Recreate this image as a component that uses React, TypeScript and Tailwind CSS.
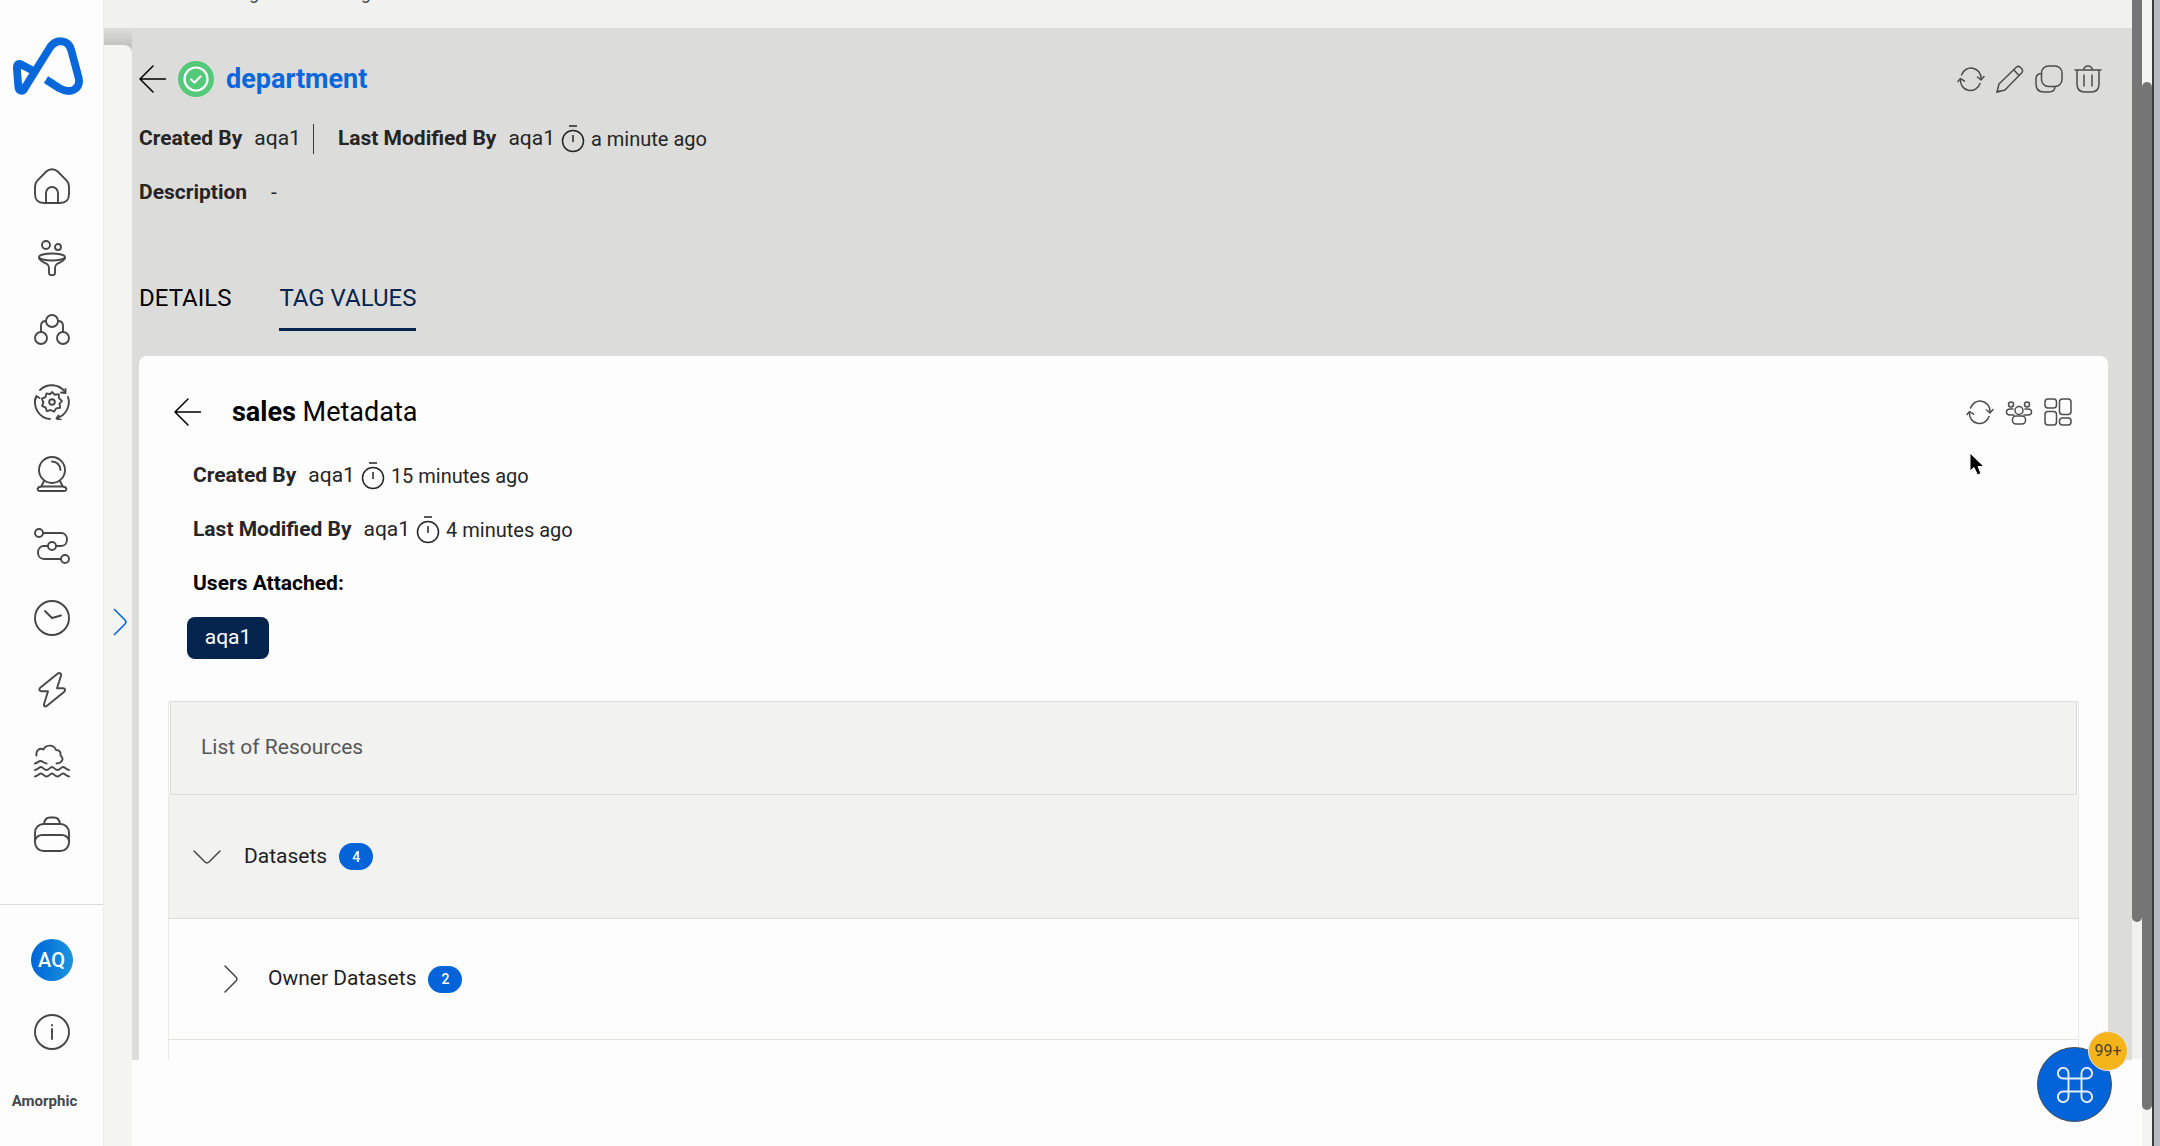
import type { ReactNode } from 'react';

type IconProps = {
  children: ReactNode;
  className?: string;
};

// 36px line icons used in the side navigation
function NavIcon({ children }: { children: ReactNode }) {
  return (
    <svg viewBox="0 0 36 36" className="size-9" fill="none" stroke="currentColor" strokeWidth="1.9" strokeLinecap="round" strokeLinejoin="round">
      {children}
    </svg>
  );
}

// 28px line icons used in toolbars
function ToolIcon({ children, className = '' }: IconProps) {
  return (
    <svg viewBox="0 0 28 28" className={`size-7 ${className}`} fill="none" stroke="currentColor" strokeWidth="1.5" strokeLinecap="round" strokeLinejoin="round">
      {children}
    </svg>
  );
}

const navItems = [
  {
    label: 'Home',
    icon: (
      <>
        <path d="M1 18.5c0-2.5.8-4.5 2.5-6.2l8.800-8.800c3-3 8.400-3 11.400 0l8.800 8.800c1.700 1.700 2.500 3.700 2.500 6.200V26c0 6-3 9-9 9h-16c-6 0-9-3-9-9z" />
        <path d="M12 35V25a6 6 0 0 1 12 0V35" />
      </>
    ),
  },
  {
    label: 'Ingestion',
    icon: (
      <>
        <circle cx="12" cy="5" r="4" />
        <circle cx="24" cy="7" r="3" />
        <ellipse cx="18" cy="17" rx="13" ry="3.5" />
        <path d="M5 18c1 3 5 4.500 8 6 1.500 1 2 2.300 2 4V33c0 3 6 3 6 0v-5c0-1.700.5-3 2-4 3-1.500 7-3 8-6" />
      </>
    ),
  },
  {
    label: 'Catalog',
    icon: (
      <>
        <circle cx="18" cy="9" r="6" />
        <circle cx="7" cy="26" r="6" />
        <circle cx="29" cy="26" r="6" />
        <path d="M7 19.500V14q0-5 5-5M29 19.500V14q0-5-5-5" />
      </>
    ),
  },
  {
    label: 'Transformation',
    icon: (
      <>
        <path d="M6 6A16.500 16.500 0 0 1 31 8M34 13A16.500 16.500 0 0 1 23 34M16 35A16.500 16.500 0 0 1 2 13" />
        <path d="M27 8.500l4.500.5v-4M27 36l-4.500-1.500 2-3M1 16l1.500-4 3 2" />
        <path d="M18 8l2.800 2.700 3.900-.6.200 4 3 2.900-2.400 2.900.6 3.800-4 .7-2.100 3.300-3.400-1.700-3.700 1.200-1.300-3.600-3.500-1.700 1.300-3.500-1.500-3.700 3.500-1.500 1.100-3.800 3.700.8z" />
        <circle cx="18" cy="18" r="2.800" />
      </>
    ),
  },
  {
    label: 'Intelligence',
    icon: (
      <>
        <circle cx="18" cy="14" r="13" />
        <path d="M18 5.500a8.500 8.500 0 0 1 8.500 8.500M10 25l-2.500 5M26 25l2.500 5" />
        <path d="M8 30.500h20c5.500 0 5.500 4.500 2 4.500H6c-3.500 0-3.500-4.500 2-4.500z" />
      </>
    ),
  },
  {
    label: 'Workflows',
    icon: (
      <>
        <circle cx="5" cy="5" r="4" />
        <circle cx="18" cy="18" r="4" />
        <circle cx="31" cy="31" r="4" />
        <path d="M9 5H27c8 0 8 13 0 13h-5M14 18H10c-8 0-8 13 0 13h17" />
      </>
    ),
  },
  {
    label: 'Schedules',
    icon: (
      <>
        <circle cx="18" cy="18" r="17" />
        <path d="M11 11l7 7 9-2.500" />
      </>
    ),
  },
  {
    label: 'Events',
    icon: (
      <path d="M23.500 1.800L6.500 15.500c-2 2-1.500 3.700 1 3.700h6.500l-4 13c-.4 2.300 1.500 2.800 3 1.600L30 20c2-1.800 1.200-3.700-1-3.700h-6l4-12.500c.7-2.200-1.500-3.700-3.500-2z" />
    ),
  },
  {
    label: 'Data lake',
    icon: (
      <>
        <path d="M2.500 11.500C1.500 6 6 3.500 9.500 5.500 11 1 19.500-.5 22 6c3.500 0 5 2 4.500 5.500 4 3 1.500 8-4 8" />
        <path d="M1 19.500c2.500-.5 3.500-2.500 5.500-2.500s3 2 6 2.500M1 26c3-.5 4-3 6-3s3 3 5.500 3 3.500-3 5.500-3 3 3 5.500 3 3.500-3 5.500-3 3 2.500 6 3M1 32.500c3-.5 4-3 6-3s3 3 5.500 3 3.500-3 5.500-3 3 3 5.500 3 3.500-3 5.500-3 3 2.500 6 3" />
      </>
    ),
  },
  {
    label: 'Business',
    icon: (
      <>
        <rect x="1" y="8" width="34" height="27" rx="8.500" />
        <path d="M10 8c.5-4.500 2.500-6.500 6-6.500h4c3.500 0 5.500 2 6 6.500M1 24.500c1-3.500 3.500-5.500 7.500-5.500h19c4 0 6.500 2 7.500 5.500" />
      </>
    ),
  },
];

function RefreshIcon() {
  return (
    <ToolIcon>
      <path d="M4.500 10a10 10 0 0 1 19.500 3.500M23 18.500a10 10 0 0 1-19.500-4" />
      <path d="M20.500 12l3.500 3 3-3.500M1 16.500l2.500-3 4 2.700" />
    </ToolIcon>
  );
}

function ArrowLeft() {
  return (
    <ToolIcon className="text-black">
      <path d="M26.500 14H1M14 1L1 14l13 13" />
    </ToolIcon>
  );
}

function Timer() {
  return (
    <svg viewBox="0 0 24 30" className="mx-1.5 h-[30px] w-6" fill="none" stroke="currentColor" strokeWidth="1.5">
      <circle cx="12" cy="17" r="10.500" />
      <path d="M8 2h8M12 11v7" />
    </svg>
  );
}

function CountBadge({ children }: { children: ReactNode }) {
  return (
    <span className="ml-3 flex h-[27px] w-[34px] items-center justify-center rounded-full bg-[#0264d8] text-sm font-medium text-white">
      {children}
    </span>
  );
}

function MetaRow({ label, user, time }: { label: string; user: string; time: string }) {
  return (
    <div className="flex h-[54px] items-center text-[21px] text-[#252525]">
      <span className="mr-3 font-bold">{label}</span>
      {user}
      <Timer />
      <span className="text-[20px]">{time}</span>
    </div>
  );
}

function Sidebar() {
  return (
    <aside className="flex w-[104px] shrink-0 flex-col items-center border-r border-[#efefef] bg-[#fdfdfd] pt-9 text-[#474747]">
      <a href="#" aria-label="Amorphic home" className="mr-2.5">
        <svg viewBox="0 0 74 60" className="h-[60px] w-[72px]" fill="none" stroke="#0768dc" strokeWidth="8" strokeLinejoin="round">
          <path d="M36 44L50 53C61 59 72 54 69.500 42L62 14C59 2 46 2 40 11L14.500 52C12 57 8 56.500 7.500 51L6 32C6 28 8 27 10.500 28.500L24 35.500" />
        </svg>
      </a>
      <nav className="mt-[72px] flex flex-col gap-9">
        {navItems.map((item) => (
          <button key={item.label} aria-label={item.label} className="block">
            <NavIcon>{item.icon}</NavIcon>
          </button>
        ))}
      </nav>
      <hr className="mt-[52px] w-full border-[#d8d8df]" />
      <button className="mt-[34px] flex size-[42px] items-center justify-center rounded-full bg-gradient-to-r from-[#0264d8] to-[#1d93dc] text-[20px] font-medium text-white">
        AQ
      </button>
      <button aria-label="Information" className="mt-[33px]">
        <NavIcon>
          <circle cx="18" cy="18" r="17" />
          <path d="M18 15v10M18 11v.5" />
        </NavIcon>
      </button>
      <p className="mt-10 mr-3.5 text-[15px] font-bold">Amorphic</p>
    </aside>
  );
}

function ResourceList() {
  return (
    <section className="mx-[29px] mt-[42px] border-x border-[#e8e8e8]">
      <h3 className="mx-px flex h-[94px] items-center border border-[#dcdce0] bg-[#f2f2f1] px-[30px] text-[21px] text-[#575757]">
        List of Resources
      </h3>
      <button className="flex h-[124px] w-full items-center border-b border-[#dcdcd8] bg-[#f2f2f1] pl-6 text-[21px] text-[#1f1f1f]">
        <ToolIcon className="mr-[23px] text-[#474747]">
          <path d="M1 8l11 11q2 1.800 4 0L27 8" />
        </ToolIcon>
        Datasets
        <CountBadge>4</CountBadge>
      </button>
      <button className="flex h-[121px] w-full items-center border-b border-[#e3e3dc] pl-12 text-[21px] text-[#1f1f1f]">
        <ToolIcon className="mr-[23px] text-[#474747]">
          <path d="M8 1l11 11q1.800 2 0 4L8 27" />
        </ToolIcon>
        Owner Datasets
        <CountBadge>2</CountBadge>
      </button>
      <div className="h-5" />
    </section>
  );
}

function TagPage() {
  return (
    <main className="flex-1 bg-[#dcdcda] pr-6 pl-[7px]">
      <header className="flex items-center justify-between pt-[33px] pr-[6px]">
        <div className="flex items-center">
          <button aria-label="Back">
            <ArrowLeft />
          </button>
          <span className="mr-3 ml-[11px] flex size-9 items-center justify-center rounded-full bg-[#54c979]">
            <svg viewBox="0 0 28 28" className="size-7" fill="none" stroke="white" strokeWidth="2.2" strokeLinecap="round" strokeLinejoin="round">
              <circle cx="14" cy="14" r="11.500" />
              <path d="M9 14.500l3.500 3 6-6" />
            </svg>
          </span>
          <h1 className="text-[27px] leading-9 font-bold text-[#0768dc]">department</h1>
        </div>
        <div className="flex gap-[11px] text-[#4c4c4c]">
          <button aria-label="Refresh">
            <RefreshIcon />
          </button>
          <button aria-label="Edit">
            <ToolIcon>
              <path d="M1 27l2-8L20.500 2q2-1.500 4 .5l1.300 1.300q1.500 2 0 4L9 25z" />
              <path d="M18 5l5 5.500M1 27l3-1" />
            </ToolIcon>
          </button>
          <button aria-label="Clone">
            <ToolIcon>
              <rect x="6.500" y="1" width="20.500" height="20.500" rx="7" />
              <path d="M6.500 8.500C2.500 8.500 1 11 1 14v5c0 5 3 8 8 8h4.500c4 0 6.500-2 6.500-5.500" />
            </ToolIcon>
          </button>
          <button aria-label="Delete">
            <ToolIcon>
              <path d="M1 5h26M3 5v14c0 5 3 8 8 8h6c5 0 8-3 8-8V5M9.500 5c.5-3 2-4 4.500-4s4 1 4.500 4M10 10v11M18 10v11" />
            </ToolIcon>
          </button>
        </div>
      </header>

      <div className="mt-[15px] flex items-center">
        <p className="flex h-[54px] items-center text-[21px] text-[#252525]">
          <span className="mr-3 font-bold">Created By</span>aqa1
        </p>
        <span className="mr-6 ml-3 h-[30px] w-px bg-[#3a3a3a]" />
        <MetaRow label="Last Modified By" user="aqa1" time="a minute ago" />
      </div>
      <p className="flex h-[54px] items-center text-[21px] text-[#252525]">
        <span className="mr-6 font-bold">Description</span>-
      </p>

      <div role="tablist" className="mt-[60px] flex gap-12 text-[24px] leading-9">
        <button role="tab" aria-selected="false" className="border-b-3 border-transparent pb-3 text-black">
          DETAILS
        </button>
        <button role="tab" aria-selected="true" className="border-b-3 border-[#04244d] pb-3 text-[#04244d]">
          TAG VALUES
        </button>
      </div>

      <section className="mt-[25px] rounded-t-lg bg-[#fdfdfd] pt-[38px]">
        <div className="flex items-center justify-between pr-9 pl-[35px]">
          <div className="flex items-center">
            <button aria-label="Back to tag values">
              <ArrowLeft />
            </button>
            <h2 className="ml-[30px] text-[27px] leading-9 text-black">
              <b>sales</b> Metadata
            </h2>
          </div>
          <div className="flex gap-[11px] text-[#4c4c4c]">
            <button aria-label="Refresh metadata">
              <RefreshIcon />
            </button>
            <button aria-label="Manage users">
              <ToolIcon>
                <circle cx="14" cy="12.500" r="4" />
                <circle cx="6" cy="6.500" r="2.500" />
                <circle cx="22" cy="6.500" r="2.500" />
                <rect x="7.500" y="18" width="13" height="8" rx="3.500" />
                <path d="M8 11H5q-3.500 0-3.500 3t3.500 3h4M20 11h3q3.500 0 3.500 3t-3.500 3h-4" />
              </ToolIcon>
            </button>
            <button aria-label="Change layout">
              <ToolIcon>
                <rect x="1" y="1" width="11.500" height="9" rx="3" />
                <rect x="1" y="13.500" width="11.500" height="13.500" rx="3" />
                <rect x="15.500" y="1" width="11.500" height="15.500" rx="3" />
                <rect x="15.500" y="20" width="11.500" height="7" rx="3" />
              </ToolIcon>
            </button>
          </div>
        </div>

        <div className="mt-[19px] pl-[54px]">
          <MetaRow label="Created By" user="aqa1" time="15 minutes ago" />
          <MetaRow label="Last Modified By" user="aqa1" time="4 minutes ago" />
          <p className="flex h-[54px] items-center text-[21px] font-bold text-black">Users Attached:</p>
        </div>
        <span className="mt-[6px] ml-12 flex h-[42px] w-[82px] items-center justify-center rounded-lg bg-[#04244d] text-[21px] text-white">
          aqa1
        </span>

        <ResourceList />
      </section>
    </main>
  );
}

export default function App() {
  return (
    <div className="relative flex h-screen overflow-hidden bg-[#fdfdfd] font-['Roboto',sans-serif]">
      <Sidebar />

      <div className="flex min-w-0 flex-1 flex-col">
        <div className="h-7 shrink-0 overflow-hidden bg-[#f1f1f0] pl-6">
          <p className="-mt-[17px] text-[18px] leading-5 text-[#474747]">Home &nbsp;&gt;&nbsp; Management &nbsp;&gt;&nbsp;&nbsp; Tags &nbsp;&gt;&nbsp; Details</p>
        </div>
        <div className="flex flex-1 items-start">
          <div className="flex self-stretch bg-gradient-to-b from-[#dcdcda] to-[#c4c4c4] to-[17px] pt-[17px]">
            <button aria-label="Expand panel" className="flex w-7 items-center justify-center rounded-tr-lg bg-[#f4f4f3] pt-[52px] text-[#0768dc]">
              <svg viewBox="0 0 16 28" className="ml-1 h-7 w-4" fill="none" stroke="currentColor" strokeWidth="1.6">
                <path d="M2 1l11 11q1.800 2 0 4L2 27" />
              </svg>
            </button>
          </div>
          <TagPage />
        </div>
      </div>

      {/* inner scrollbar */}
      <div className="h-[1059px] w-2.5 shrink-0 bg-[#f1f1f0]">
        <div className="h-[922px] rounded-b-full bg-[#757575]" />
      </div>
      {/* outer scrollbar */}
      <div className="w-2.5 shrink-0 bg-[#f4f4f0] pt-[82px]">
        <div className="h-[1028px] rounded-full bg-[#757575]" />
      </div>
      <div className="w-2 shrink-0 border-l-2 border-[#3c3c3c] bg-[#b9b9c2]" />

      <button aria-label="Command menu" className="absolute right-12 bottom-6 flex size-[75px] items-center justify-center rounded-full border border-[#4a4a4a] bg-[#0264d8]">
        <svg viewBox="0 0 36 36" className="size-9" fill="none" stroke="#e8f0fa" strokeWidth="1.9">
          <path d="M11.500 11.500H6.500a5.300 5.300 0 1 1 5-5v23a5.300 5.300 0 1 1-5-5h23a5.300 5.300 0 1 1-5 5v-23a5.300 5.300 0 1 1 5 5z" />
        </svg>
      </button>
      <span className="absolute right-8 bottom-[75px] flex size-10 items-center justify-center rounded-full border border-[#e8e8e8] bg-[#f4b41a] text-[16px] text-[#4a4328]">
        99+
      </span>

      {/* mouse pointer */}
      <svg viewBox="0 0 16 24" className="absolute top-[452px] right-[175px] h-6 w-4" fill="black" stroke="white" strokeWidth="1">
        <path d="M1 1v18l4-3.500L8.500 23l3.500-1.500L9 14.500h6z" />
      </svg>
    </div>
  );
}
